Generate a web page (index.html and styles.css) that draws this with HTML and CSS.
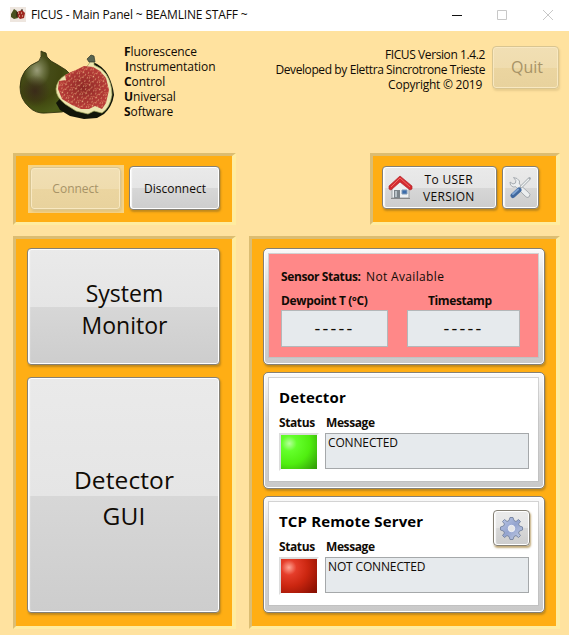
FILE: index.html
```html
<!DOCTYPE html>
<html lang="en">
<head>
<meta charset="utf-8">
<title>FICUS - Main Panel</title>
<link rel="stylesheet" href="styles.css">
</head>
<body>
<div class="titlebar">
  <svg class="app-icon" width="16" height="15" viewBox="0 0 16 15"><path fill="#eee6df" d="M0 0h16v15H0z"/><path fill="#48501e" d="M1 7l3-5 3 2 1 7-4 1-3-2z"/><path fill="#9e2922" d="M7 5l5-2 3 3-1 5-4 1-3-3z"/><path stroke="#efe5c6" stroke-dasharray="1 2" d="M8 6h6M9 9h5"/><path stroke="#25180b" d="M7 5v5M12 2v2"/></svg>
  <span class="title">FICUS - Main Panel ~ BEAMLINE STAFF ~</span>
  <svg class="controls" width="104" height="12" viewBox="0 0 104 12" fill="none"><path stroke="#111" d="M0 6.5h10"/><path stroke="#c8c8c8" d="M45.500 1.500h9v9h-9zM91 1l10 10M101 1L91 11"/></svg>
</div>
<header class="header">
  <svg class="fig" width="100" height="76" viewBox="0 0 100 76">
    <defs>
      <radialGradient id="skin" cx=".34" cy=".31" r=".7"><stop offset="0" stop-color="#9a9c79"/><stop offset=".2" stop-color="#6a7040"/><stop offset=".38" stop-color="#454b17"/><stop offset=".7" stop-color="#40450f"/><stop offset="1" stop-color="#4c5b18"/></radialGradient>
      <radialGradient id="shade"><stop offset="0" stop-color="#38231a"/><stop offset="1" stop-color="#38231a" stop-opacity="0"/></radialGradient>
      <radialGradient id="pulp"><stop offset="0" stop-color="#8d2925"/><stop offset="1" stop-color="#b93d39"/></radialGradient>
      <pattern id="seeds" width="11" height="9" patternUnits="userSpaceOnUse" patternTransform="rotate(24)"><path stroke="#f2c58d" stroke-width="1.100" d="M1 1h1M5 0v1M8 3h1M3 4l1 1M6 6h1M0 7h1M9 8h1"/><path stroke="#e68c66" d="M3 2h1M10 5v1M5 8h1M1 4v1"/></pattern>
    </defs>
    <path fill="url(#skin)" stroke="#292b0a" stroke-width=".8" d="M23 3l2 1 3 1 1 4 4 4 7 4 8 5 4 4v35l-8 3-16 1q-10 1-17-6-9-8-9-20 0-9 5-16 4-6 14-10 3-4 2-10z"/>
    <ellipse cx="17" cy="43" rx="15" ry="16" fill="url(#shade)" opacity=".8"/>
    <path fill="#111408" d="M75 14q10 4 15 13 5 10 6 20-2 12-10 19l-7 4-13 1-14-3-10-6-4-7z"/>
    <path fill="#ece4ad" stroke="#a0a65b" stroke-width=".7" d="M72 13h4v4q8 3 12 9 6 9 6 21-2 13-10 18l-8-2-6 3-12-3-11-7q-9-7-9-15 1-9 8-13 7-4 16-6 9-3 10-9z"/>
    <path fill="#596551" stroke="#30392b" stroke-width=".7" d="M69 11l4-4 3 1 1 6-6 0z"/>
    <path fill="url(#pulp)" d="M58 22l8-4 9 1 7 4 6 7 3 12-3 13-4 6-7-3-6 3-8 0-9-4-10-6-4-10 1-8 7-1-1-5 6-3z"/>
    <path fill="url(#seeds)" d="M58 22l8-4 9 1 7 4 6 7 3 12-3 13-4 6-7-3-6 3-8 0-9-4-10-6-4-10 1-8 7-1-1-5 6-3z"/>
  </svg>
  <div class="acronym">
    <div><b>F</b>luorescence</div><div class="ins"><b>I</b>nstrumentation</div><div><b>C</b>ontrol</div><div><b>U</b>niversal</div><div><b>S</b>oftware</div>
  </div>
  <div class="version"><div class="v1">FICUS Version 1.4.2</div><div class="v2">Developed by Elettra Sincrotrone Trieste</div><div class="v3">Copyright © 2019</div></div>
  <button class="btn off quit">Quit</button>
</header>
<div class="toolbar">
  <section class="panel connection"><span class="disabled-wrap"><button class="btn off connect">Connect</button></span><button class="btn disconnect">Disconnect</button></section>
  <section class="panel tools">
    <button class="btn user">
      <svg width="25" height="25" viewBox="0 0 25 25"><path fill="#eef0f1" stroke="#9ba1a5" d="M4 13l8-7 9 7v10H4z"/><path fill="#7d858a" d="M6 15h6v8H6z"/><path fill="#b9c2c7" d="M7 16h2v6H7z"/><path fill="#3b6cab" stroke="#7f99b7" d="M14 15h5v4h-5z"/><path fill="#d52b30" stroke="#b2272c" stroke-width=".7" d="M12 1L1 11v3l2 1 9-8 10 8 2-1v-3z"/><path stroke="#ef6a66" fill="none" d="M3 12l9-9 10 9"/><path stroke="#888" d="M3 23.500h19"/></svg>
      <span>To USER<br>VERSION</span>
    </button>
    <button class="btn wrench"><svg width="23" height="23" viewBox="0 0 23 23"><path fill="#eceeef" stroke="#9fa5aa" stroke-width=".9" d="M4.500 1.500l3.500 1 2.500 2.500-.2 3 9.200 8.500 1.500 2-1 2.500-2 .5-2-1.500-9-9.200-3 .2-2.500-2-.5-3 3 2 2.500-1 .3-2.500z"/><path stroke="#a3a9ae" stroke-width="2.800" stroke-linecap="round" d="M20.500 2.500l-8.500 8.500"/><path stroke="#eff1f2" stroke-width="1.300" d="M20 3l-8 8"/><path stroke="#41699f" stroke-width="5" stroke-linecap="round" d="M10 14l-6 5.500"/><path stroke="#7fa3d1" stroke-width="2" stroke-linecap="round" d="M9 13.500l-5 4.500"/></svg></button>
  </section>
</div>
<main class="main">
  <section class="panel nav"><button class="btn big sys"><span>System</span><span>Monitor</span></button><button class="btn big det"><span>Detector</span><span>GUI</span></button></section>
  <section class="panel status">
    <article class="card"><div class="inner sensor">
      <div class="line"><b class="ss">Sensor Status:</b><span class="na">Not Available</span></div>
      <div class="readings"><div class="reading dew"><b>Dewpoint T (ºC)</b><div class="field">-----</div></div><div class="reading time"><b>Timestamp</b><div class="field">-----</div></div></div>
    </div></article>
    <article class="card"><div class="inner device"><h2 class="h-det">Detector</h2><div class="labels"><b>Status</b><b>Message</b></div><div class="state"><i class="led green"></i><div class="message m-ok">CONNECTED</div></div></div></article>
    <article class="card"><div class="inner device"><h2 class="h-tcp">TCP Remote Server</h2><div class="labels"><b>Status</b><b>Message</b></div><div class="state"><i class="led red"></i><div class="message m-no">NOT CONNECTED</div></div>
      <button class="btn gear"><svg width="25" height="25" viewBox="-12.500 -12.500 25 25"><defs><linearGradient id="metal" x2="1" y2="1"><stop stop-color="#bdc9e7"/><stop offset=".5" stop-color="#94a4cf"/><stop offset="1" stop-color="#c7d0e6"/></linearGradient></defs><path fill="url(#metal)" stroke="#74829f" stroke-width=".9" d="M-1.500-11H1.500L2.500-8 4.500-7 7-9 9-7 7-4.500 8-2.500 11-1.500V1.500L8 2.500 7 4.500 9 7 7 9 4.500 7 2.500 8 1.500 11H-1.500L-2.500 8-4.500 7-7 9-9 7-7 4.500-8 2.500-11 1.500V-1.500L-8-2.500-7-4.500-9-7-7-9-4.500-7-2.500-8z"/><circle r="3.200" fill="#e5e5e6" stroke="#f0f2fa"/></svg></button>
    </div></article>
  </section>
</main>
</body>
</html>
```
FILE: styles.css
```css
* { box-sizing: border-box; }
body { margin: 0; width: 569px; height: 635px; overflow: hidden; background: #ffe29f; color: #100b05; font: 12px/15px "Open Sans", "Noto Sans", sans-serif; }
b { font-weight: 700; }
button { font: inherit; color: inherit; white-space: nowrap; }
svg { display: block; flex: none; }
.titlebar { height: 31px; background: #fff; display: flex; align-items: center; padding: 0 13px 2px 10px; }
.title { margin-left: 5px; white-space: nowrap; letter-spacing: -.15px; }
.controls { margin-left: auto; }

.header { height: 122px; display: flex; align-items: flex-start; padding: 13px 10px 0 18px; }
.fig { margin-top: 4px; }
.acronym { width: 120px; margin-left: 6px; letter-spacing: -.08px; }
.ins { padding-left: 1px; }
.version { margin: 3px 7px 0 auto; text-align: right; white-space: nowrap; letter-spacing: -.4px; }
.v3 { padding-right: 3px; letter-spacing: -.25px; }

.btn { display: flex; align-items: center; justify-content: center; padding: 0; border: 1px solid #858075; border-radius: 4px; background: linear-gradient(#eaeaea, #e5e5e5 50.500%, #d7d7d7 50.500%, #cdcdcd); box-shadow: inset 0 0 0 1px #fff, inset 2px 0 1px #f8f8f8, 1px 2px 2px #98712299; }
.off { color: #a79367; border-color: #d9c591; background: linear-gradient(#f1dfb4, #efdcae 51%, #ebd5a0 51%, #e8d29d); box-shadow: inset 0 0 0 1px #f8e8c1, 1px 2px 2px #c9ae7266; }
.quit { width: 67px; height: 43px; margin-top: 2px; font-size: 16px; padding-left: 3px; }

.toolbar { height: 83px; display: flex; justify-content: space-between; align-items: flex-start; padding: 0 9px 0 13px; }
.panel { display: flex; background: #ffae14; border: solid; border-width: 3px 4px 3px 3px; border-color: #dcbd72 #ffeca0 #ffeca0 #dcbd72; }
.connection { width: 223px; height: 72px; padding: 9px 0 0 12px; gap: 5px; }
.disabled-wrap { width: 96px; height: 48px; background: #f6d487; padding: 2px; }
.connect { width: 91px; height: 43px; }
.disconnect { width: 91px; height: 44px; margin-top: 1px; padding-left: 1px; }
.tools { width: 190px; height: 72px; padding: 10px 0 0 9px; gap: 5px; }
.user { width: 115px; height: 43px; line-height: 17px; letter-spacing: .3px; gap: 10px; justify-content: flex-start; padding-left: 5px; }
.wrench { width: 37px; height: 43px; }

.main { display: flex; justify-content: space-between; padding: 0 9px 0 13px; }
.nav { width: 223px; height: 393px; padding: 9px 0 0 11px; flex-direction: column; gap: 12px; }
.big { width: 193px; flex-direction: column; }
.sys { height: 117px; font-size: 23px; line-height: 32px; padding: 4px 0 0 2px; }
.det { height: 236px; font-size: 24.500px; line-height: 36px; padding: 5px 0 0 1px; letter-spacing: .1px; }
.status { width: 311px; height: 393px; padding: 9px 0 0 11px; flex-direction: column; gap: 7px; }
.card { width: 282px; height: 117px; border: 1px solid #858075; border-radius: 5px; padding: 5px 6px 7px 5px; background: linear-gradient(#fafafa, #d8d8d8 40%, #c9c9c9); box-shadow: inset 0 0 0 1px #fff, 1px 2px 2px #98712299; }
.inner { position: relative; height: 103px; background: #fff; box-shadow: 0 0 0 1px #bbb9; }
.inner.sensor { background: #ff8888; padding: 15px 0 0 12px; }
.line { display: flex; height: 24px; white-space: nowrap; }
.ss { width: 85px; letter-spacing: -.4px; }
.na { letter-spacing: .35px; }
.readings { display: flex; gap: 19px; }
.reading { display: flex; flex-direction: column; }
.reading b { height: 17px; letter-spacing: -.35px; }
.field { height: 37px; background: #e6eaed; border: 1px solid #b4b7b9; display: flex; align-items: center; justify-content: center; font-size: 18px; letter-spacing: 2.200px; }
.dew { width: 107px; }
.time { width: 113px; }
.time b { padding-left: 21px; letter-spacing: -.4px; }
.device { padding: 9px 9px 0 10px; }
h2 { margin: 0; color: #000; font-size: 15px; line-height: 20px; letter-spacing: .15px; }
.labels { display: flex; height: 17px; margin-top: 8px; letter-spacing: -.4px; }
.labels b:first-child { width: 47px; }
.state { display: flex; gap: 6px; margin-top: 1px; }
.led { width: 40px; height: 38px; border: 2px solid #dcdcdc; border-right-color: #fff; border-bottom-color: #fff; }
.green { background: radial-gradient(circle at 23% 25%, #b7ff9d 0, #64ff2b 20%, #50ee10 55%, #36a809 90%, #218202 120%); }
.red { background: radial-gradient(circle at 22% 25%, #ffa696 0, #e53d2a 20%, #cb2610 50%, #951304 85%, #690800 120%); }
.message { width: 204px; height: 36px; background: #e6eaed; border: 1px solid #a5a8aa; padding: 1px 2px; line-height: 15px; letter-spacing: -.15px; }
.gear { position: absolute; left: 224px; top: 8px; width: 37px; height: 36px; }
```
